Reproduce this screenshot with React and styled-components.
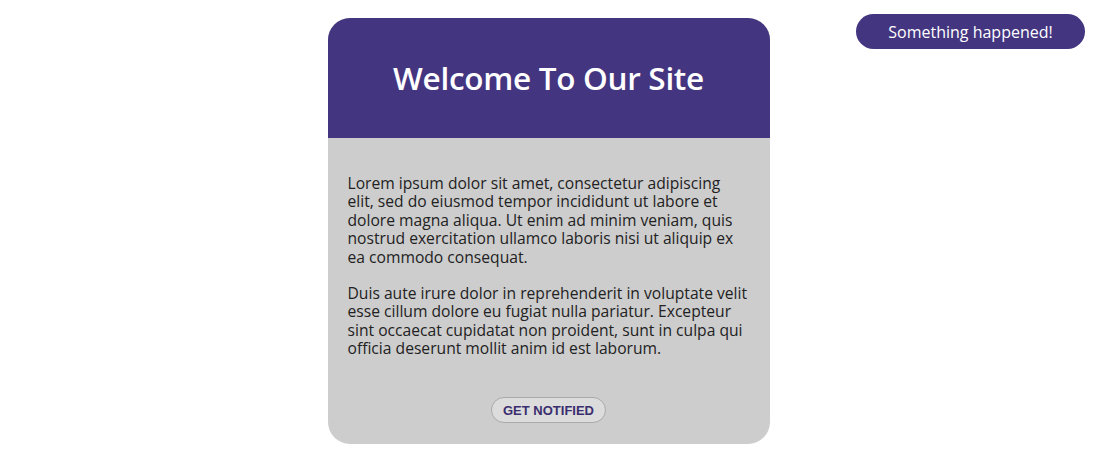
import React from "react";
import styled, { createGlobalStyle } from "styled-components";

const Global = createGlobalStyle`
  html, body { margin: 0; padding: 0; background: #ffffff; }
  body { font-family: "Open Sans", "Lato", sans-serif; }
`;

const Page = styled.div`
  position: relative;
  width: 100%;
  min-height: 458px;
  display: flex;
  justify-content: center;
  align-items: flex-start;
  padding: 18px 0 0 1px;
  box-sizing: border-box;
`;

const Card = styled.div`
  width: 442px;
  border-radius: 22px;
  overflow: hidden;
  background: #cdcdcd;
  display: flex;
  flex-direction: column;
`;

const Header = styled.header`
  height: 120px;
  background: #433580;
  display: flex;
  align-items: center;
  justify-content: center;
`;

const Title = styled.h1`
  margin: 0 0 2px;
  color: #ffffff;
  font-family: "Open Sans", sans-serif;
  font-weight: 600;
  font-size: 31.5px;
  letter-spacing: -0.3px;
`;

const Body = styled.div`
  padding: 36px 20px 21px;
  display: flex;
  flex-direction: column;
`;

const Para = styled.p`
  margin: 0 0 ${(p) => (p.$last ? "0" : "18px")};
  color: #222222;
  font-family: "Open Sans", sans-serif;
  font-size: 15.65px;
  line-height: 18.4px;
`;

const Actions = styled.div`
  display: flex;
  justify-content: center;
  padding-top: 39.6px;
`;

const Button = styled.button`
  height: 26px;
  padding: 0 11px;
  border-radius: 14px;
  border: 1px solid #a9a9a9;
  background: #dcdcdc;
  color: #3a2e6e;
  font-family: "Liberation Sans", Arial, sans-serif;
  font-weight: 700;
  font-size: 13px;
  text-transform: uppercase;
  cursor: pointer;
`;

const Toast = styled.div`
  position: absolute;
  top: 14px;
  right: 11px;
  width: 229px;
  height: 35px;
  border-radius: 18px;
  background: #433580;
  color: #ffffff;
  font-family: "Open Sans", sans-serif;
  font-size: 16px;
  display: flex;
  align-items: center;
  justify-content: center;
`;

export default function App() {
  return (
    <>
      <Global />
      <Page>
        <Card>
          <Header>
            <Title>Welcome To Our Site</Title>
          </Header>
          <Body>
            <Para>
              Lorem ipsum dolor sit amet, consectetur adipiscing elit, sed do
              eiusmod tempor incididunt ut labore et dolore magna aliqua. Ut
              enim ad minim veniam, quis nostrud exercitation ullamco laboris
              nisi ut aliquip ex ea commodo consequat.
            </Para>
            <Para $last>
              Duis aute irure dolor in reprehenderit in voluptate velit esse
              cillum dolore eu fugiat nulla pariatur. Excepteur sint occaecat
              cupidatat non proident, sunt in culpa qui officia deserunt mollit
              anim id est laborum.
            </Para>
            <Actions>
              <Button>Get Notified</Button>
            </Actions>
          </Body>
        </Card>
        <Toast>Something happened!</Toast>
      </Page>
    </>
  );
}
